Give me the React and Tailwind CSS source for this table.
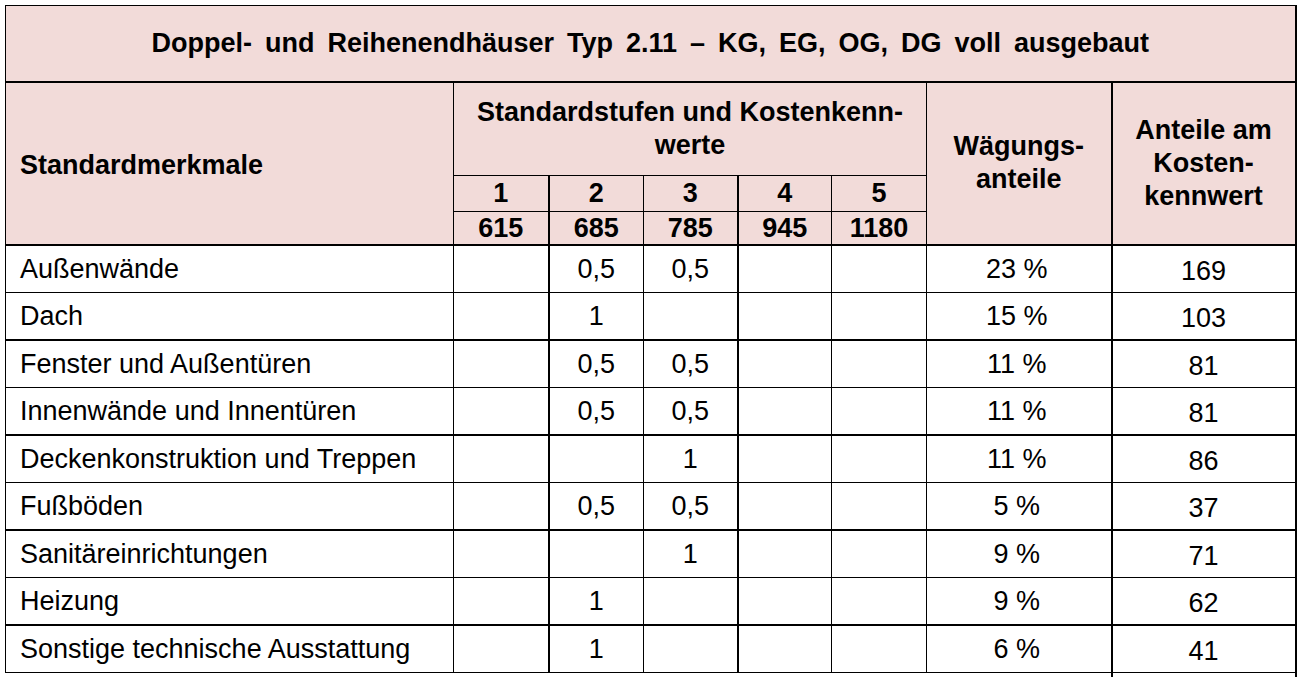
const rows = [
  ['Außenwände', ['', '0,5', '0,5', '', ''], '23 %', '169'],
  ['Dach', ['', '1', '', '', ''], '15 %', '103'],
  ['Fenster und Außentüren', ['', '0,5', '0,5', '', ''], '11 %', '81'],
  ['Innenwände und Innentüren', ['', '0,5', '0,5', '', ''], '11 %', '81'],
  ['Deckenkonstruktion und Treppen', ['', '', '1', '', ''], '11 %', '86'],
  ['Fußböden', ['', '0,5', '0,5', '', ''], '5 %', '37'],
  ['Sanitäreinrichtungen', ['', '', '1', '', ''], '9 %', '71'],
  ['Heizung', ['', '1', '', '', ''], '9 %', '62'],
  ['Sonstige technische Ausstattung', ['', '1', '', '', ''], '6 %', '41'],
]

const stufen = ['1', '2', '3', '4', '5']
const werte = ['615', '685', '785', '945', '1180']

// columns 2 and 4 have a heavier left rule in the original
const colEdge = ['', 'border-l-2', '', 'border-l-2', '']

const cell = 'border border-black p-0'
const head = 'border border-black p-0 bg-[#f2dbd9] font-bold text-center'

export default function App() {
  return (
    <div className="min-h-screen bg-white pl-[5px] pt-[5px] font-['Liberation_Sans',Arial,sans-serif] text-[27px] leading-[33px] text-black">
      <table className="w-[1290px] table-fixed border-collapse">
        <colgroup>
          <col className="w-[448px]" />
          <col className="w-[95px]" />
          <col className="w-[95px]" />
          <col className="w-[94px]" />
          <col className="w-[94px]" />
          <col className="w-[95px]" />
          <col className="w-[185px]" />
          <col className="w-[184px]" />
        </colgroup>
        <thead>
          <tr className="h-[76px]">
            <th colSpan={8} className={`${head} border-b-2 border-r-2 [word-spacing:5.5px]`}>
              Doppel- und Reihenendhäuser Typ 2.11 – KG, EG, OG, DG voll ausgebaut
            </th>
          </tr>
          <tr className="h-[94px]">
            <th rowSpan={3} className={`${head} border-b-2 pl-[14px] pt-1 text-left`}>
              Standardmerkmale
            </th>
            <th colSpan={5} className={`${head} px-2`}>
              Standardstufen und Kostenkenn-
              <br />
              werte
            </th>
            <th rowSpan={3} className={`${head} border-b-2`}>
              Wägungs-
              <br />
              anteile
            </th>
            <th rowSpan={3} className={`${head} border-b-2 border-l-2 border-r-2`}>
              Anteile am
              <br />
              Kosten-
              <br />
              kennwert
            </th>
          </tr>
          <tr className="h-[36px]">
            {stufen.map((s, i) => (
              <th key={s} className={`${head} ${colEdge[i]}`}>
                {s}
              </th>
            ))}
          </tr>
          <tr className="h-[33px]">
            {werte.map((w, i) => (
              <th key={w} className={`${head} ${colEdge[i]} border-b-2 leading-[30px]`}>
                {w}
              </th>
            ))}
          </tr>
        </thead>
        <tbody>
          {rows.map(([name, vals, pct, val], r) => {
            const edge = r % 2 === 1 ? 'border-b-2' : ''
            return (
              <tr key={name} className="h-[47.5px]">
                <td className={`${cell} ${edge} pl-[14px] pt-0.5 text-left`}>{name}</td>
                {vals.map((v, i) => (
                  <td key={i} className={`${cell} ${edge} ${colEdge[i]} pt-0.5 text-center`}>
                    {v}
                  </td>
                ))}
                <td className={`${cell} ${edge} pr-1 pt-0.5 text-center`}>{pct}</td>
                <td className={`${cell} ${edge} border-l-2 border-r-2 pt-1.5 text-center`}>{val}</td>
              </tr>
            )
          })}
          <tr className="h-[5px]">
            <td colSpan={7} className="border-0 p-0" />
            <td className="border-0 border-l-2 border-r-2 border-black p-0" />
          </tr>
        </tbody>
      </table>
    </div>
  )
}
